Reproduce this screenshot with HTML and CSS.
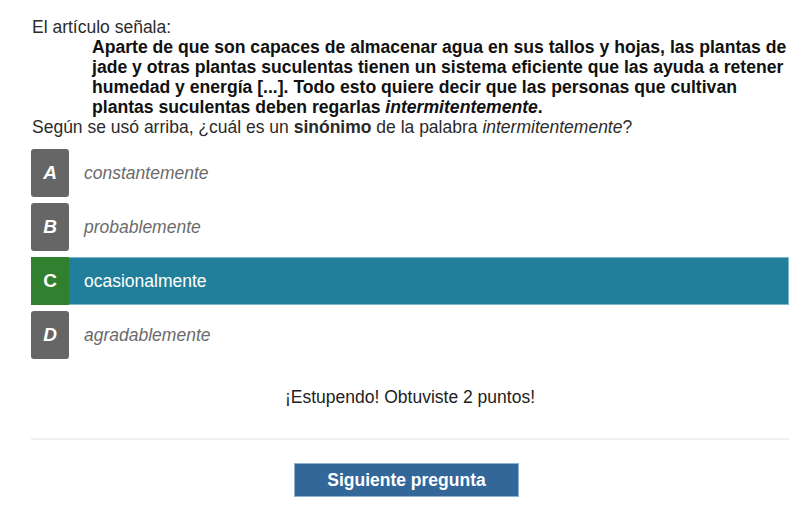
FILE: index.html
```html
<!DOCTYPE html>
<html lang="es">
<head>
<meta charset="utf-8">
<title>Pregunta</title>
<link rel="stylesheet" href="styles.css">
</head>
<body>
<main class="quiz">
  <p class="intro">El artículo señala:</p>
  <blockquote class="quote">Aparte de que son capaces de almacenar agua en sus tallos y hojas, las plantas de jade y otras plantas suculentas tienen un sistema eficiente que las ayuda a retener humedad y energía [...]. Todo esto quiere decir que las personas que cultivan plantas suculentas deben regarlas <em>intermitentemente</em>.</blockquote>
  <p class="question">Según se usó arriba, ¿cuál es un <strong>sinónimo</strong> de la palabra <em>intermitentemente</em>?</p>
  <ul class="options">
    <li class="option"><span class="letter">A</span><span class="label">constantemente</span></li>
    <li class="option"><span class="letter">B</span><span class="label">probablemente</span></li>
    <li class="option selected"><span class="letter">C</span><span class="label">ocasionalmente</span></li>
    <li class="option"><span class="letter">D</span><span class="label">agradablemente</span></li>
  </ul>
  <p class="feedback">¡Estupendo! Obtuviste 2 puntos!</p>
  <hr class="divider">
  <div class="actions"><button class="next" type="button">Siguiente pregunta</button></div>
</main>
</body>
</html>
```
FILE: styles.css
```css
html, body {
  margin: 0;
  padding: 0;
  background: #fff;
}
body {
  font-family: "Liberation Sans", Arial, sans-serif;
  font-size: 17.5px;
  line-height: 20px;
  color: #2b2b2b;
}
.quiz {
  width: 758px;
  padding: 17px 0 0 31px;
}
.intro, .question {
  margin: 0;
  padding-left: 1px;
}
.quote {
  margin: 0 0 0 61px;
  font-size: 17.6px;
  font-weight: bold;
  color: #111;
}
.options {
  list-style: none;
  margin: 12px 0 0;
  padding: 0;
  display: flex;
  flex-direction: column;
  gap: 6px;
}
.option {
  display: flex;
  align-items: center;
  height: 48px;
}
.letter {
  width: 38px;
  height: 48px;
  border-radius: 3px;
  background: #666;
  color: #fff;
  font-weight: bold;
  font-style: italic;
  font-size: 19px;
  display: flex;
  align-items: center;
  justify-content: center;
}
.label {
  padding-left: 15px;
  font-style: italic;
  color: #6b6b6b;
}
.option.selected {
  background: #217f9b;
  box-shadow: inset 0 0 0 1px #7db7c9;
}
.option.selected .letter {
  background: #31802f;
  border-radius: 0;
  font-style: normal;
}
.option.selected .label {
  color: #fff;
  font-style: normal;
}
.feedback {
  margin: 28px 0 0;
  text-align: center;
  color: #222;
}
.divider {
  margin: 31px 0 0;
  border: 0;
  border-top: 2px solid #f0f0f0;
  height: 0;
}
.actions {
  display: flex;
  justify-content: center;
  padding: 23px 7px 0 0;
}
.next {
  width: 225px;
  height: 34px;
  background: #336699;
  border: 1px solid #8fb0cf;
  color: #fff;
  font-family: "Liberation Sans", Arial, sans-serif;
  font-size: 17.5px;
  font-weight: bold;
  padding: 0;
}
```
